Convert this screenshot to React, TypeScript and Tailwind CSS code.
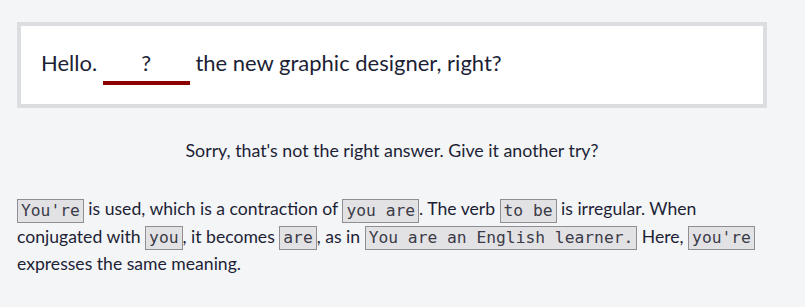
import React from "react";

const Code = ({ children }: { children: React.ReactNode }) => (
  <code className="inline-block whitespace-pre border border-[#8e8e94] bg-[#e2e2e5] px-[3px] leading-[22px] text-[16.3px] text-[#3b3b48] align-middle [font-family:'DejaVu_Sans_Mono',monospace]">
    {children}
  </code>
);

export default function App() {
  return (
    <div className="min-h-[307px] w-full bg-[#f4f5f7] text-[#1d1f36] [font-family:Lato,'Noto_Sans',sans-serif]">
      <div className="w-[750px] ml-[17px] pt-[22px]">
        <div className="border-[4px] border-[#dcdde0] bg-white h-[86px] flex items-center pl-[20px] pr-[21px] pb-[4px]">
          <p className="text-[22px] leading-[30px]">
            Hello.{" "}
            <span className="inline-block w-[87px] text-center border-b-[4px] border-[#8b0000] pb-[3px] -mb-[8px] leading-[30px]">?</span>{" "}
            the new graphic designer, right?
          </p>
        </div>
        <p className="mt-[29px] text-center text-[17.8px] leading-[26px]">
          Sorry, that's not the right answer. Give it another try?
        </p>
        <p className="mt-[32px] text-[17.6px] leading-[27.5px]">
          <Code>You're</Code> is used, which is a contraction of <Code>you are</Code>. The verb <Code>to be</Code> is irregular. When conjugated with <Code>you</Code>, it becomes <Code>are</Code>, as in <Code>You are an English learner.</Code> Here, <Code>you're</Code> expresses the same meaning.
        </p>
      </div>
    </div>
  );
}
